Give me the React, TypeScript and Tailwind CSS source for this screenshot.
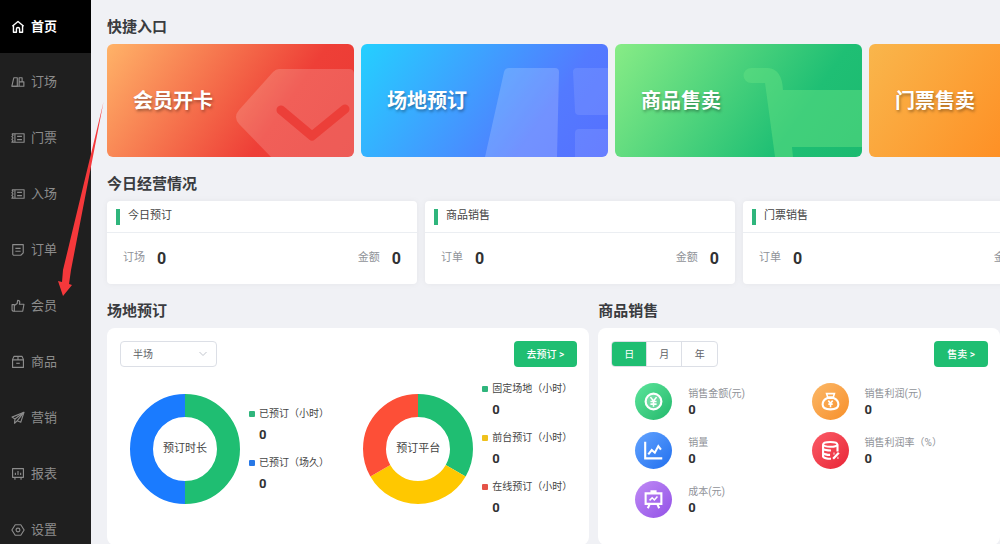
import React, { useState } from 'react';
import clsx from 'clsx';

type Slice = {
  label: string;
  value: number;
  color: string;
  dot: string;
};

const Home = () => <path d="M1.5 7.2 8 1.8l6.5 5.4M2.8 6.2V14h3.4v-3.6a1.8 1.8 0 0 1 3.6 0V14h3.4V6.2" />;

const Court = () => (
  <>
    <path d="M3.2 3.2h4v9.6H1z" />
    <path d="M9.3 12.8V3.2h3.4v4.6H9.3M9.3 7.8h5.4v5H9.3M1 12.8h13.7" />
  </>
);

const Ticket = () => (
  <>
    <path d="M4.5 3.2H15v9.6H4.5zM1 3.2l1.4 1.6L1 6.4l1.4 1.6L1 9.6l1.4 1.6L1 12.8h3.5M1 3.2h3.5" />
    <path d="M7 6.2h5.5M7 9.8h5.5" />
  </>
);

const Order = () => (
  <>
    <path d="M2 1.8h12v9.4L11.2 14H3.5A1.5 1.5 0 0 1 2 12.5z" />
    <path d="M5 6.2h6M5 9.4h6" />
  </>
);

const Thumb = () => (
  <>
    <path d="M1.2 6.5h2.6V14H2.4L1.2 12.8z" />
    <path d="M3.8 7.5 7 5.2 7.6 1.5c1.8 0 2.6 1 2.4 2.6L9.6 6h5.2l-1.4 8H3.8" />
  </>
);

const Goods = () => (
  <>
    <path d="M3.5 1.5h9L14.2 5v9.2H1.8V5zM1.8 5.6h12.4M8 1.5v4.1" />
    <path d="M6 9.5h4" />
  </>
);

const Plane = () => (
  <>
    <path d="M14.8 1.5 1.2 7l3.3 2.2L4 14l3-2.8 4.2 1.6z" />
    <path d="m14.8 1.5-10.3 7.7M7 11.2l7.8-9.7" />
  </>
);

const Report = () => (
  <>
    <path d="M1.8 1.8h12.4v10H1.8zM4.5 11.8v2.7M11.5 11.8v2.7" />
    <path d="M5 6.5V9M8 4.5V9M11 6.5V9" />
  </>
);

const Gear = () => (
  <>
    <path d="M4.8 2h6.4L15 8l-3.8 6H4.8L1 8z" />
    <circle cx="8" cy="8" r="2.2" />
  </>
);

const menu = [
  { name: '首页', icon: Home },
  { name: '订场', icon: Court },
  { name: '门票', icon: Ticket },
  { name: '入场', icon: Ticket },
  { name: '订单', icon: Order },
  { name: '会员', icon: Thumb },
  { name: '商品', icon: Goods },
  { name: '营销', icon: Plane },
  { name: '报表', icon: Report },
  { name: '设置', icon: Gear },
];

const TagArt = () => (
  <>
    <path
      d="M172 25h70q5 0 5 5v83h-83l-32-33q-6-7 0-14l34-38q3-3 6-3z"
      fill="#fff"
      fillOpacity=".17"
    />
    <path d="m174 66 31 26 33-27" fill="none" stroke="#ec3f39" strokeWidth="9" strokeLinecap="round" strokeLinejoin="round" />
  </>
);

const CourtArt = () => (
  <g fill="#fff" fillOpacity=".18">
    <path d="M148 24h46q4 0 4 4l-2 85h-72l19-85q1-4 5-4z" />
    <path d="M216 24h31v47h-29q-4 0-4-4l-2-39q0-4 4-4z" fillOpacity=".1" />
    <path d="M218 85h29v28h-33V89q0-4 4-4z" fillOpacity=".1" />
  </g>
);

const CartArt = () => (
  <path
    d="M136 24h17q14 1 15 22h79v57h-70l1 10h-18l-10-74h-14a7 7 0 0 1 0-15z"
    fill="#62e082"
    fillOpacity=".5"
  />
);

const shortcuts = [
  { title: '会员开卡', bg: 'bg-[linear-gradient(125deg,#ffb368_0%,#ee3f37_68%,#ea3a35_100%)]', art: TagArt },
  { title: '场地预订', bg: 'bg-[linear-gradient(125deg,#24d0ff_0%,#537aff_72%,#5670ff_100%)]', art: CourtArt },
  { title: '商品售卖', bg: 'bg-[linear-gradient(125deg,#88ec86_0%,#1fbf74_72%,#1cba70_100%)]', art: CartArt },
  { title: '门票售卖', bg: 'bg-[linear-gradient(125deg,#f9b64c_0%,#ff8a1f_75%)]', art: null },
];

const today = [
  { title: '今日预订', label: '订场' },
  { title: '商品销售', label: '订单' },
  { title: '门票销售', label: '订单' },
];

const duration: Slice[] = [
  { label: '已预订（小时）', value: 0, color: '#1fbe72', dot: 'bg-[#2fb57c]' },
  { label: '已预订（场久）', value: 0, color: '#1a7bff', dot: 'bg-[#2878e6]' },
];

const platform: Slice[] = [
  { label: '固定场地（小时）', value: 0, color: '#1fbe72', dot: 'bg-[#2fb57c]' },
  { label: '前台预订（小时）', value: 0, color: '#ffc800', dot: 'bg-[#efc11d]' },
  { label: '在线预订（小时）', value: 0, color: '#fd4f37', dot: 'bg-[#e55347]' },
];

const YenIcon = () => (
  <>
    <circle cx="12" cy="12" r="9" fill="white" fillOpacity=".25" strokeWidth="2.5" />
    <path d="m8.5 7 3.5 4.5L15.5 7M8.5 12h7M8.500 15h7M12 11.5V18" fill="none" />
  </>
);

const BagIcon = () => (
  <>
    <path d="M7.5 3h9l-1.3 4H8.8z" fill="none" />
    <path d="M8.5 8C4.5 9.5 3 12.5 3 15.5 3 19.5 6 21 12 21s9-1.5 9-5.5c0-3-1.5-6-5.5-7.5z" fill="none" strokeWidth="2.4" />
    <path d="m9.5 11 2.5 3 2.5-3M9.5 15h5M12 14v4.5" fill="none" />
  </>
);

const TrendIcon = () => (
  <>
    <path d="M2.5 2v19H22" fill="none" strokeWidth="2.4" />
    <path d="m6 16.500 4-5 3.500 3L17.500 7l3 4" fill="none" strokeWidth="2.4" />
  </>
);

const DataIcon = () => (
  <>
    <path d="M3.5 5v14c1.5 2 5 2.5 9 2.5M20 5v8M3.5 10c2 2 6 2 9 2M3.5 15c2 1.8 5 2 8 2" fill="none" strokeWidth="2.4" />
    <ellipse cx="11.7" cy="5" rx="8.2" ry="2.8" fill="none" strokeWidth="2.2" />
    <path d="m15 21.5 6.5-7M15.500 15.5h1M20 20.5h1" fill="none" strokeWidth="2.6" />
  </>
);

const BoardIcon = () => (
  <>
    <path d="M3 5h18v12H3zM8.5 2.500h7M7.5 17.5l-2 4.5M16.5 17.5l2 4.5" fill="none" strokeWidth="2.4" />
    <path d="m7.5 13 3-3 2.5 2.5 3.5-4" fill="none" />
  </>
);

const sales = [
  { label: '销售金额(元)', icon: YenIcon, bg: 'bg-linear-to-br from-[#5be59b] to-[#1fb86c]' },
  { label: '销售利润(元)', icon: BagIcon, bg: 'bg-linear-to-br from-[#fbb866] to-[#f78f25]' },
  { label: '销量', icon: TrendIcon, bg: 'bg-linear-to-br from-[#62a3ff] to-[#1f6fee]' },
  { label: '销售利润率（%）', icon: DataIcon, bg: 'bg-linear-to-br from-[#fb5a67] to-[#e81f35]' },
  { label: '成本(元)', icon: BoardIcon, bg: 'bg-linear-to-br from-[#c08af5] to-[#9350e6]' },
];

function Sidebar() {
  return (
    <nav className="w-[91px] shrink-0 overflow-hidden bg-[#1f1f1f]">
      {menu.map((item, index) => {
        const Icon = item.icon;
        return (
          <a
            key={item.name}
            href="#"
            className={clsx(
              'flex items-center gap-1.5 pl-[11px] text-[13px]',
              index === 0 ? 'mb-px h-[53px] bg-black font-bold text-white' : 'h-14 text-[#8c8c8c]'
            )}
          >
            <svg
              viewBox="0 0 16 16"
              className="h-3.5 w-3.5 shrink-0"
              fill="none"
              stroke="currentColor"
              strokeWidth={index === 0 ? 1.6 : 1.3}
              strokeLinejoin="round"
            >
              <Icon />
            </svg>
            {item.name}
          </a>
        );
      })}
    </nav>
  );
}

function SectionTitle({ children }: { children: React.ReactNode }) {
  return <h2 className="mb-[7px] text-[15px] leading-5 font-bold text-[#3a3c40]">{children}</h2>;
}

function Amount({ label }: { label: string }) {
  return (
    <div className="flex items-center gap-3">
      {label}
      <span className="text-[16px] font-bold text-[#303133]">0</span>
    </div>
  );
}

function Donut({ title, slices }: { title: string; slices: Slice[] }) {
  const share = 100 / slices.length;

  return (
    <div className="flex items-center gap-[9px]">
      <div className="grid shrink-0 place-items-center *:col-start-1 *:row-start-1">
        <svg viewBox="0 0 110 110" className="h-[110px] w-[110px] -rotate-90">
          {slices.map((slice, index) => (
            <circle
              key={slice.label}
              cx="55"
              cy="55"
              r="43.5"
              fill="none"
              stroke={slice.color}
              strokeWidth="23"
              pathLength="100"
              strokeDasharray={`${share} ${100 - share}`}
              strokeDashoffset={-share * index}
            />
          ))}
        </svg>
        <span className="text-[11px] text-[#444]">{title}</span>
      </div>
      <ul className="flex flex-col gap-[11px]">
        {slices.map((slice) => (
          <li key={slice.label}>
            <div className="flex items-center gap-1 text-[10px] leading-4 whitespace-nowrap text-[#444]">
              <span className={clsx('h-1.5 w-1.5 rounded-[1px]', slice.dot)} />
              {slice.label}
            </div>
            <div className="mt-1 pl-2.5 text-[13px] leading-[18px] font-bold text-[#303133]">{slice.value}</div>
          </li>
        ))}
      </ul>
    </div>
  );
}

export default function App() {
  const [period, setPeriod] = useState('日');

  return (
    <div className="relative flex h-screen overflow-hidden bg-[#f0f1f5] font-['Roboto','Noto_Sans_CJK_SC',sans-serif]">
      <Sidebar />

      <main className="min-w-0 flex-1 overflow-hidden pl-4">
        <section className="pt-[17px]">
          <SectionTitle>快捷入口</SectionTitle>
          <div className="flex gap-[7px]">
            {shortcuts.map((card) => {
              const Art = card.art;
              return (
                <button
                  key={card.title}
                  className={clsx('relative h-[113px] w-[247px] shrink-0 overflow-hidden rounded-md pl-[26px] text-left', card.bg)}
                >
                  {Art && (
                    <svg viewBox="0 0 247 113" className="absolute inset-0 h-full w-full">
                      <Art />
                    </svg>
                  )}
                  <span className="relative text-[20px] font-bold text-white [text-shadow:1px_2px_3px_rgba(0,0,0,0.35)]">
                    {card.title}
                  </span>
                </button>
              );
            })}
          </div>
        </section>

        <section className="pt-[17px]">
          <SectionTitle>今日经营情况</SectionTitle>
          <div className="flex gap-2">
            {today.map((card) => (
              <div key={card.title} className="w-[310px] shrink-0 rounded-sm bg-white shadow-[0_0_6px_rgba(0,0,0,0.05)]">
                <div className="flex h-8 items-center gap-2 border-b border-[#ebeef2] pl-[9px] text-[11px] text-[#444]">
                  <span className="h-4 w-1 bg-[#2fb57c]" />
                  {card.title}
                </div>
                <div className="flex h-[51px] items-center justify-between px-4 text-[11px] text-[#909399]">
                  <Amount label={card.label} />
                  <Amount label="金额" />
                </div>
              </div>
            ))}
          </div>
        </section>

        <div className="flex gap-[9px] pt-[17px]">
          <section className="min-w-0 flex-[6]">
            <SectionTitle>场地预订</SectionTitle>
            <div className="rounded-lg bg-white pt-[13px] pr-3 pb-7 pl-[13px]">
              <div className="flex items-center justify-between">
                <div className="relative flex">
                  <select
                    aria-label="场地"
                    className="h-[26px] w-[97px] appearance-none rounded-sm border border-[#dcdfe6] bg-white pl-3 text-[10px] text-[#606266]"
                  >
                    <option>半场</option>
                  </select>
                  <svg
                    viewBox="0 0 8 8"
                    className="pointer-events-none absolute top-[9px] right-2.5 h-2 w-2"
                    fill="none"
                    stroke="#c0c4cc"
                  >
                    <path d="m.5 2 3.5 3.5L7.5 2" />
                  </svg>
                </div>
                <button className="h-[26px] rounded-sm bg-[#1fbe72] px-[13px] text-[10px] font-medium text-white">去预订 &gt;</button>
              </div>
              <div className="mt-3.5 flex items-center justify-between pr-[5px] pl-2.5">
                <Donut title="预订时长" slices={duration} />
                <Donut title="预订平台" slices={platform} />
              </div>
            </div>
          </section>

          <section className="flex min-w-0 flex-[5] flex-col">
            <SectionTitle>商品销售</SectionTitle>
            <div className="flex-1 rounded-lg bg-white pt-[13px] pr-3 pl-[13px]">
              <div className="flex items-center justify-between">
                <div className="flex h-[26px] overflow-hidden rounded-sm border border-[#dcdfe6]">
                  {['日', '月', '年'].map((name) => (
                    <button
                      key={name}
                      onClick={() => setPeriod(name)}
                      className={clsx(
                        'w-[35px] border-r border-[#dcdfe6] text-[10px] last:border-r-0',
                        period === name ? 'bg-[#1fbe72] text-white' : 'text-[#606266]'
                      )}
                    >
                      {name}
                    </button>
                  ))}
                </div>
                <button className="h-[26px] rounded-sm bg-[#1fbe72] px-[13px] text-[10px] font-medium text-white">售卖 &gt;</button>
              </div>
              <div className="mt-4 grid grid-cols-2 gap-y-3 pl-6">
                {sales.map((item) => {
                  const Icon = item.icon;
                  return (
                    <div key={item.label} className="flex items-center gap-4">
                      <span className={clsx('flex h-[37px] w-[37px] shrink-0 items-center justify-center rounded-full', item.bg)}>
                        <svg viewBox="0 0 24 24" className="h-[21px] w-[21px]" fill="white" stroke="white" strokeWidth="1.8">
                          <Icon />
                        </svg>
                      </span>
                      <div className="whitespace-nowrap">
                        <div className="text-[10px] leading-4 text-[#909399]">{item.label}</div>
                        <div className="text-[13px] leading-4 font-bold text-[#303133]">0</div>
                      </div>
                    </div>
                  );
                })}
              </div>
            </div>
          </section>
        </div>
      </main>

      <svg viewBox="0 0 50 200" className="pointer-events-none absolute top-[98px] left-[56px] h-[200px] w-[50px]">
        <path d="M47.5 4 15 172l-2 14 3 1-9 11-5-15 4 1 1-12z" fill="#f5383b" />
      </svg>
    </div>
  );
}
